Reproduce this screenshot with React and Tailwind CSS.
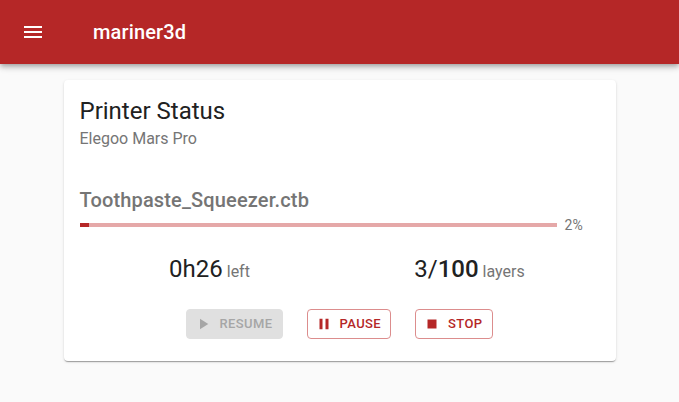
import React from "react";

const PlayIcon = () => (
  <svg viewBox="0 0 24 24" className="w-[18px] h-[18px] fill-current">
    <path d="M8 5v14l11-7z" />
  </svg>
);

const PauseIcon = () => (
  <svg viewBox="0 0 24 24" className="w-[18px] h-[18px] fill-current">
    <path d="M6 19h4V5H6v14zm8-14v14h4V5h-4z" />
  </svg>
);

const StopIcon = () => (
  <svg viewBox="0 0 24 24" className="w-[18px] h-[18px] fill-current">
    <path d="M6 6h12v12H6z" />
  </svg>
);

const MenuIcon = () => (
  <svg viewBox="0 0 24 24" className="w-6 h-6 fill-current">
    <path d="M3 18h18v-2H3v2zm0-5h18v-2H3v2zm0-7v2h18V6H3z" />
  </svg>
);

const ActionButton = ({ icon, label, disabled }) => (
  <button
    disabled={disabled}
    className={`${disabled
      ? "bg-[#e0e0e0] text-[#a6a6a6] border-[#e0e0e0]"
      : "bg-white text-[#b52727] border-[#dc8d8d]"
      } h-[30px] flex items-center border rounded pl-[7px] pr-[9px] text-[13px] font-medium tracking-[0.4px] uppercase`}
  >
    <span className="mr-[7px] flex">{icon}</span>
    {label}
  </button>
);

const App = () => {
  const progress = 2;

  return (
    <div className="min-h-[402px] bg-[#fafafa] font-['Roboto',sans-serif]">
      {/* app bar */}
      <header className="h-16 bg-[#b52727] text-white flex items-center px-[21px] shadow-[0_2px_4px_-1px_rgba(0,0,0,0.2),0_4px_5px_0_rgba(0,0,0,0.14),0_1px_10px_0_rgba(0,0,0,0.12)]">
        <MenuIcon />
        <h1 className="ml-[48px] text-[20px] font-medium tracking-[0.15px]">mariner3d</h1>
      </header>

      {/* status card */}
      <div className="w-[552px] mx-auto mt-4 bg-white rounded shadow-[0_2px_1px_-1px_rgba(0,0,0,0.2),0_1px_1px_0_rgba(0,0,0,0.14),0_1px_3px_0_rgba(0,0,0,0.12)] px-4 pt-[15px] pb-[22px]">
        <h2 className="text-[24px] leading-[32px] text-[#212121]">Printer Status</h2>
        <p className="text-[16px] leading-[24px] text-[#757575]">Elegoo Mars Pro</p>

        <p className="mt-[33px] text-[20px] leading-[32px] font-medium text-[#757575] tracking-[0.15px]">
          Toothpaste_Squeezer.ctb
        </p>

        <div className="-mt-px flex items-center">
          <div className="flex-1 h-1 bg-[#e5a8a8]">
            <div className="h-1 bg-[#b52727]" style={{ width: `${progress}%` }} />
          </div>
          <span className="w-[43px] pl-[8px] text-[14px] leading-[20px] text-[#757575]">{progress}%</span>
        </div>

        <div className="mt-[18px] grid grid-cols-2 text-center">
          <div className="leading-[32px]">
            <span className="text-[24px] text-[#212121]">0h26</span>
            <span className="text-[16px] text-[#757575]"> left</span>
          </div>
          <div className="leading-[32px]">
            <span className="text-[24px] text-[#212121]">3/<span className="font-medium">100</span></span>
            <span className="text-[16px] text-[#757575]"> layers</span>
          </div>
        </div>

        <div className="mt-[21px] flex justify-center gap-6">
          <ActionButton icon={<PlayIcon />} label="Resume" disabled />
          <ActionButton icon={<PauseIcon />} label="Pause" />
          <ActionButton icon={<StopIcon />} label="Stop" />
        </div>
      </div>
    </div>
  );
};

export default App;
